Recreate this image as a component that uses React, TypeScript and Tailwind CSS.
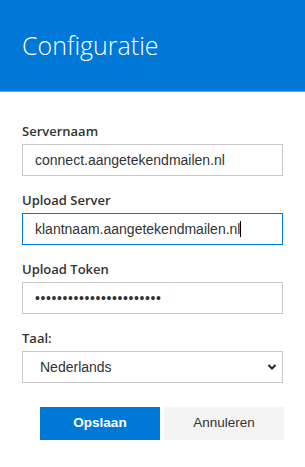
import { useState } from 'react'

const labelCls = "block text-[13px] leading-5 font-semibold text-[#333] mb-[3px] [font-family:'Open_Sans',sans-serif]"
const inputCls = "w-full h-8 px-3 border border-[#c8c8c8] bg-white text-[14px] text-[#333] outline-none [font-family:'Liberation_Sans',Arial,sans-serif]"

export default function App() {
  const [server, setServer] = useState('connect.aangetekendmailen.nl')
  const [token, setToken] = useState('•••••••••••••••••••••••')
  const [lang, setLang] = useState('nl')

  return (
    <div className="w-[305px] h-[467px] bg-white">
      {/* Header */}
      <div className="h-[92px] bg-[#0078d7] border-b border-[#5aa8ea] px-[22px] pt-[28px]">
        <h1 className="text-[25px] leading-[34px] font-light text-white [font-family:'Open_Sans',sans-serif]">
          Configuratie
        </h1>
      </div>

      {/* Form */}
      <div className="px-[22px] pt-[29px] space-y-[14px]">
        <div>
          <label className={labelCls}>Servernaam</label>
          <input className={inputCls} value={server} onChange={(e) => setServer(e.target.value)} />
        </div>

        <div>
          <label className={labelCls}>Upload Server</label>
          <div className="w-full h-8 px-3 border border-[#0078d7] bg-white flex items-center text-[14px] text-[#333] [font-family:'Liberation_Sans',Arial,sans-serif]">
            <span>klantnaam.aangetekendmailen.nl</span>
            <span className="inline-block w-px h-4 bg-black" />
          </div>
        </div>

        <div>
          <label className={labelCls}>Upload Token</label>
          <input className={inputCls + ' text-[7px] tracking-[0.6px]'} value={token} onChange={(e) => setToken(e.target.value)} />
        </div>

        <div>
          <label className={labelCls}>Taal:</label>
          <div className="relative">
            <select
              className={inputCls + ' appearance-none pl-[17px]'}
              value={lang}
              onChange={(e) => setLang(e.target.value)}
            >
              <option value="nl">Nederlands</option>
              <option value="en">English</option>
            </select>
            <svg className="absolute right-[6px] top-[12px] w-[10px] h-[8px] pointer-events-none" viewBox="0 0 10 8" fill="none">
              <path d="M1.5 2 L5 5.5 L8.5 2" stroke="#222" strokeWidth="2" />
            </svg>
          </div>
        </div>
      </div>

      {/* Buttons */}
      <div className="flex justify-end gap-1 px-[21px] mt-6 text-[13.5px] [font-family:'Liberation_Sans',Arial,sans-serif]">
        <button className="w-[120px] h-[33px] bg-[#0078d7] text-white font-bold">Opslaan</button>
        <button className="w-[120px] h-[33px] bg-[#f4f4f4] text-[#333]">Annuleren</button>
      </div>
    </div>
  )
}
